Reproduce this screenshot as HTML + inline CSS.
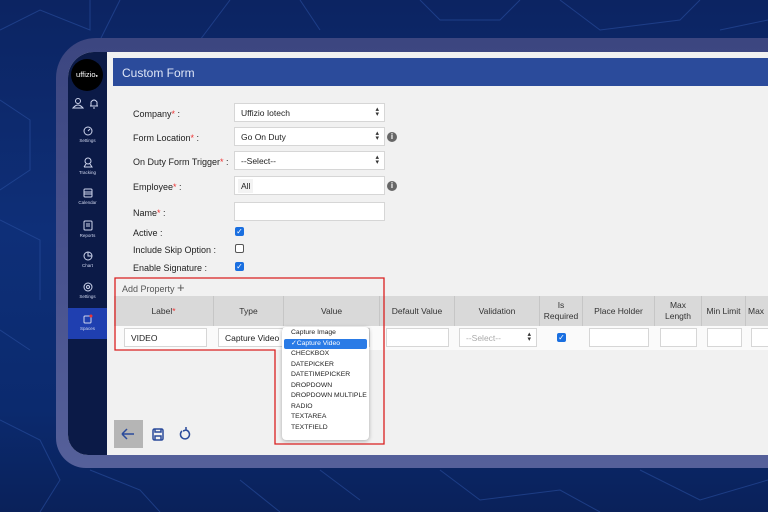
<!DOCTYPE html>
<html><head><meta charset="utf-8"><style>
*{margin:0;padding:0;box-sizing:border-box}
body{width:768px;height:512px;overflow:hidden;position:relative;font-family:"Liberation Sans",sans-serif;background:linear-gradient(180deg,#0c2462 0%,#0e2f78 45%,#0b2a6e 80%,#0a215a 100%)}
.abs{position:absolute}
.bezel{left:56px;top:38px;width:740px;height:430px;background:linear-gradient(180deg,#3c4680,#4a5490 60%,#55609a);border-radius:40px 0 0 30px}
.screen{left:68px;top:52px;width:700px;height:403px;background:#f1f1f1;border-radius:26px 0 0 20px;overflow:hidden}
.side{left:0;top:0;width:39px;height:403px;background:#0b1a47}
.t{position:absolute;font-size:9px;color:#222;white-space:nowrap}
.inp{position:absolute;background:#fff;border:1px solid #d6d6d6;height:19px;font-size:8.5px;color:#222;padding:4px 6px;white-space:nowrap;overflow:hidden}
.arr{position:absolute;right:5px;top:3px;font-size:7px;color:#333;line-height:5px}
.cb{position:absolute;width:9px;height:9px;border-radius:2px;background:#1a6fe0;color:#fff;font-size:8px;line-height:9px;text-align:center}
.cbe{position:absolute;width:9px;height:9px;border-radius:2px;border:1px solid #555;background:#fff}
.info{position:absolute;width:10px;height:10px;border-radius:50%;background:#666;color:#fff;font-size:8px;font-weight:bold;text-align:center;line-height:10px}
.th{position:absolute;top:0;height:30px;border-right:1px solid #c6c6c6;font-size:8.5px;color:#333;display:flex;align-items:center;justify-content:center;text-align:center;line-height:11px}
.si{position:absolute;left:0;width:39px;text-align:center;color:#cfd6ee;font-size:4.5px}
.si svg{display:block;margin:0 auto 2px}
.dd div{font-size:6.8px;color:#222;height:10.5px;line-height:10.5px;padding-left:9px}
</style></head><body>
<svg class="abs" style="left:0;top:0" width="768" height="512" stroke="#2a4fa0" stroke-width="1" fill="none" opacity=".6">
<path d="M0 30 L40 10 L90 30 L90 0 M120 0 L100 40 L140 60 L200 40 L230 0 M300 0 L320 30 M420 0 L440 20 L500 20 L520 0 M560 0 L600 30 L680 20 L700 0 M720 30 L768 20 M0 100 L30 120 L30 170 L0 190 M0 220 L40 240 L40 300 M0 330 L30 350 M0 420 L40 440 L60 480 L40 512 M90 470 L140 490 L160 512 M240 480 L280 512 M320 470 L360 500 M440 470 L480 500 L560 490 L600 512 M640 470 L700 500 L768 480"/>
</svg>
<div class="abs bezel"></div>
<div class="abs screen">
 <div class="abs side">
  <div class="abs" style="left:3px;top:7px;width:32px;height:32px;border-radius:50%;background:#000;color:#fff;font-size:7.5px;text-align:center;line-height:32px">uffizio<span style="font-size:4px">●</span></div>
  <svg class="abs" style="left:4px;top:45px" width="30" height="12" stroke="#cfd6ee" fill="none" stroke-width="1"><circle cx="6" cy="4" r="2.5"/><path d="M1 11 Q6 5 11 11 Z"/><path d="M19 9 L19 5 Q22 1 25 5 L25 9 Z M18 9 L26 9 M21 11 L23 11"/></svg>
  <div class="si" style="top:74px"><svg width="10" height="10" stroke="#cfd6ee" fill="none"><circle cx="5" cy="5" r="4"/><path d="M5 5 L7 3"/></svg>Settings</div>
  <div class="si" style="top:105px"><svg width="10" height="11" stroke="#cfd6ee" fill="none"><circle cx="5" cy="4" r="3"/><path d="M1 10 L9 10 L7 7 M3 7 L1 10"/></svg>Tracking</div>
  <div class="si" style="top:136px"><svg width="10" height="10" stroke="#cfd6ee" fill="none"><rect x="1" y="1" width="8" height="8" rx="1"/><path d="M1 4 H9 M1 6 H9"/></svg>Calendar</div>
  <div class="si" style="top:168px"><svg width="10" height="11" stroke="#cfd6ee" fill="none"><rect x="1" y="1" width="8" height="9" rx="1"/><path d="M3 4 H7 M3 6 H7"/></svg>Reports</div>
  <div class="si" style="top:199px"><svg width="10" height="10" stroke="#cfd6ee" fill="none"><circle cx="5" cy="5" r="4"/><path d="M5 1 V5 H9"/></svg>Chart</div>
  <div class="si" style="top:230px"><svg width="10" height="10" stroke="#cfd6ee" fill="none"><circle cx="5" cy="5" r="4"/><circle cx="5" cy="5" r="1.5"/></svg>Settings</div>
  <div class="abs" style="left:0;top:256px;width:39px;height:31px;background:#1f3fb0"></div>
  <div class="si" style="top:262px"><svg width="10" height="10" stroke="#cfd6ee" fill="none"><rect x="1" y="2" width="7" height="7" rx="1"/><circle cx="8" cy="2" r="1.5" fill="#e33" stroke="none"/></svg>Spaces</div>
 </div>
 <div class="abs" style="left:45px;top:6px;width:660px;height:28px;background:#2b4b9b;color:#dfe6f7;font-size:12px;padding:8px 9px">Custom Form</div>
</div>
<div class="t" style="left:133px;top:109px">Company<span style="color:#e33">*</span> :</div>
<div class="t" style="left:133px;top:133px">Form Location<span style="color:#e33">*</span> :</div>
<div class="t" style="left:133px;top:157px">On Duty Form Trigger<span style="color:#e33">*</span> :</div>
<div class="t" style="left:133px;top:182px">Employee<span style="color:#e33">*</span> :</div>
<div class="t" style="left:133px;top:208px">Name<span style="color:#e33">*</span> :</div>
<div class="t" style="left:133px;top:228px">Active :</div>
<div class="t" style="left:133px;top:245px">Include Skip Option :</div>
<div class="t" style="left:133px;top:263px">Enable Signature :</div>
<div class="inp" style="left:234px;top:103px;width:151px">Uffizio Iotech<span class="arr">▴<br>▾</span></div>
<div class="inp" style="left:234px;top:127px;width:151px">Go On Duty<span class="arr">▴<br>▾</span></div>
<div class="inp" style="left:234px;top:151px;width:151px">--Select--<span class="arr">▴<br>▾</span></div>
<div class="inp" style="left:234px;top:176px;width:151px;padding:2px 3px"><span style="display:inline-block;background:#f3f3f3;padding:2px 3px">All</span></div>
<div class="inp" style="left:234px;top:202px;width:151px"></div>
<div class="info" style="left:387px;top:132px">i</div>
<div class="info" style="left:387px;top:181px">i</div>
<div class="cb" style="left:235px;top:227px">✓</div>
<div class="cbe" style="left:235px;top:244px"></div>
<div class="cb" style="left:235px;top:262px">✓</div>
<div class="t" style="left:122px;top:284px;color:#555">Add Property <span style="font-size:13px;line-height:8px">+</span></div>
<div class="abs" style="left:114px;top:296px;width:654px;height:30px;background:#d9d9d9"></div>
<div class="abs" style="left:114px;top:296px;width:654px;height:30px">
 <div class="th" style="left:0;width:100px">Label<span style="color:#e33">*</span></div>
 <div class="th" style="left:100px;width:70px">Type</div>
 <div class="th" style="left:170px;width:96px">Value</div>
 <div class="th" style="left:266px;width:75px">Default Value</div>
 <div class="th" style="left:341px;width:85px">Validation</div>
 <div class="th" style="left:426px;width:43px">Is<br>Required</div>
 <div class="th" style="left:469px;width:72px">Place Holder</div>
 <div class="th" style="left:541px;width:47px">Max<br>Length</div>
 <div class="th" style="left:588px;width:44px">Min Limit</div>
 <div class="th" style="left:632px;width:30px;justify-content:flex-start;padding-left:2px">Max</div>
</div>
<div class="abs" style="left:114px;top:326px;width:654px;height:24px;background:#fafafa"></div>
<div class="inp" style="left:124px;top:328px;width:83px">VIDEO</div>
<div class="inp" style="left:218px;top:328px;width:65px">Capture Video</div>
<div class="inp" style="left:288px;top:328px;width:82px"></div>
<div class="inp" style="left:386px;top:328px;width:63px"></div>
<div class="inp" style="left:459px;top:328px;width:78px;color:#aaa">--Select--<span class="arr">▴<br>▾</span></div>
<div class="cb" style="left:557px;top:333px">✓</div>
<div class="inp" style="left:589px;top:328px;width:60px"></div>
<div class="inp" style="left:660px;top:328px;width:37px"></div>
<div class="inp" style="left:707px;top:328px;width:35px"></div>
<div class="inp" style="left:751px;top:328px;width:30px"></div>
<div class="abs dd" style="left:282px;top:327px;width:87px;height:113px;background:#fff;border-radius:4px;box-shadow:0 1px 4px rgba(0,0,0,.3);padding-top:1px">
 <div>Capture Image</div>
 <div style="background:#2a7be6;color:#fff;margin:0 2px;padding-left:7px;border-radius:2px">✓Capture Video</div>
 <div>CHECKBOX</div><div>DATEPICKER</div><div>DATETIMEPICKER</div><div>DROPDOWN</div><div>DROPDOWN MULTIPLE</div><div>RADIO</div><div>TEXTAREA</div><div>TEXTFIELD</div>
</div>
<svg class="abs" style="left:0;top:0" width="768" height="512" fill="none" stroke="#d92020" stroke-width="1.3"><path d="M115 278 H384 V444 H275 V350 H115 Z"/></svg>
<div class="abs" style="left:114px;top:420px;width:29px;height:28px;background:#b5b5b5"></div>
<svg class="abs" style="left:120px;top:426px" width="80" height="16" fill="none" stroke="#2b4b9b" stroke-width="1.5"><path d="M2 8 H14 M2 8 L7 3 M2 8 L7 13"/><rect x="33" y="3" width="10" height="11" rx="1.5"/><path d="M35 3 V6 H41 V3 M35 14 V10 H41 V14"/><path d="M62 5 A4.5 4.5 0 1 0 66 4 M66 1 L66 4 L63 5"/></svg>
</body></html>
